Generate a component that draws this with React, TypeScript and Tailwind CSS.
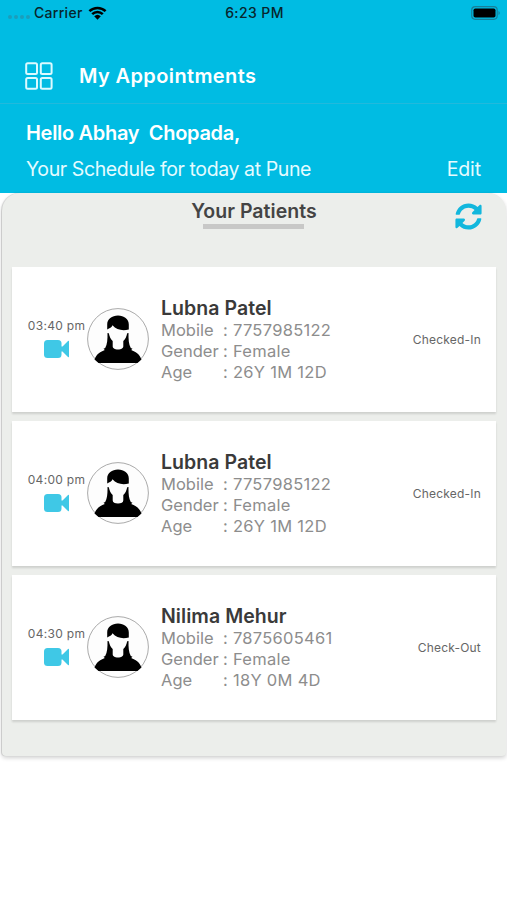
import React from 'react';
import { FaSyncAlt } from 'react-icons/fa';

type Appointment = {
  time: string;
  name: string;
  mobile: string;
  gender: string;
  age: string;
  status: string;
};

const appointments: Appointment[] = [
  { time: '03:40 pm', name: 'Lubna Patel', mobile: '7757985122', gender: 'Female', age: '26Y 1M 12D', status: 'Checked-In' },
  { time: '04:00 pm', name: 'Lubna Patel', mobile: '7757985122', gender: 'Female', age: '26Y 1M 12D', status: 'Checked-In' },
  { time: '04:30 pm', name: 'Nilima Mehur', mobile: '7875605461', gender: 'Female', age: '18Y 0M 4D', status: 'Check-Out' },
];

export default function App() {
  return (
    <div className="h-[900px] w-[507px] overflow-hidden bg-white font-['Inter',sans-serif]">
      <header className="h-[193px] bg-[#00bce3] text-white">
        <StatusBar />
        <div className="flex h-[78px] items-center border-b border-[#22b9dc] pt-[23px] pl-[25px]">
          <GridIcon />
          <h1 className="ml-[26px] text-[20px] leading-[26px] font-semibold tracking-[0.38px] whitespace-nowrap">My Appointments</h1>
        </div>
        <div className="pt-[16px] pr-[26px] pl-[26px]">
          <p className="text-[20px] leading-[26px] font-semibold tracking-[-0.3px] whitespace-pre">Hello Abhay  Chopada,</p>
          <div className="mt-[10px] flex justify-between text-[19.5px] leading-[26px] whitespace-nowrap text-[#e4fbff]">
            <span className="tracking-[-0.39px]">Your Schedule for today at Pune</span>
            <span className="tracking-[-0.1px]">Edit</span>
          </div>
        </div>
      </header>

      <main className="mr-px ml-[2px] h-[563px] rounded-t-[18px] rounded-b-[4px] bg-[#eceeeb] px-[10px] shadow-[0_2px_4px_rgba(0,0,0,0.18),-1px_0_1px_rgba(0,0,0,0.15)]">
        <div className="grid h-[74px] grid-cols-3 items-start">
          <div className="col-start-2 flex flex-col items-center pt-[5px]">
            <h2 className="text-[19.5px] leading-[26px] font-semibold tracking-[0.05px] whitespace-nowrap text-[#444]">Your Patients</h2>
            <div className="h-[5px] w-[101px] bg-[#c8c8c7]" />
          </div>
          <FaSyncAlt className="mt-[10px] mr-[14px] size-[27px] justify-self-end text-[#12b7dd]" />
        </div>
        <div className="flex flex-col gap-[9px]">
          {appointments.map((a) => (
            <PatientCard key={a.time} {...a} />
          ))}
        </div>
      </main>
    </div>
  );
}

const PatientCard: React.FC<Appointment> = ({ time, name, mobile, gender, age, status }) => (
  <section className="flex h-[145px] items-center bg-white pr-[15px] pl-[16px] shadow-[0_2px_2px_rgba(0,0,0,0.13)]">
    <div className="flex w-[57px] flex-col items-center pb-[3px]">
      <span className="text-[12px] leading-[16px] tracking-[0.3px] whitespace-nowrap text-[#666]">{time}</span>
      <VideoIcon />
    </div>
    <Avatar />
    <div className="ml-[12px] text-[16.5px] leading-[20.7px] text-[#8d8d8d]">
      <h3 className="mt-[1px] text-[19.5px] leading-[23px] font-semibold tracking-[0.05px] text-[#3a3a3a]">{name}</h3>
      <Detail label="Mobile" value={mobile} />
      <Detail label="Gender" value={gender} />
      <Detail label="Age" value={age} />
    </div>
    <span className="ml-auto pt-[1px] text-[12px] leading-[16px] tracking-[0.2px] whitespace-nowrap text-[#666]">{status}</span>
  </section>
);

const Detail: React.FC<{ label: string; value: string }> = ({ label, value }) => (
  <div className="flex whitespace-pre">
    <span className="w-[62px]">{label}</span>
    <span className="tracking-[0.28px]">: {value}</span>
  </div>
);

const StatusBar = () => (
  <div className="flex h-[26px] items-center text-[14px] font-medium text-[#08252c]">
    <div className="flex flex-1 items-center pl-[8px]">
      <div className="mt-[8px] flex gap-[2px]">
        {[0, 1, 2, 3].map((i) => (
          <i key={i} className="size-[4px] rounded-full bg-[#1b9dbb]" />
        ))}
      </div>
      <span className="-mt-px ml-[4px] tracking-[0.3px]">Carrier</span>
      <svg width="19" height="14" viewBox="0 0 19 14" className="ml-[5px]">
        <path d="M1.4 5.2a11.6 11.6 0 0 1 16.2 0M4.2 8.2a7.6 7.6 0 0 1 10.6 0" fill="none" stroke="#000" strokeWidth="2.5" />
        <path d="M6.2 10.3a4.8 4.8 0 0 1 6.6 0L9.5 13.7z" fill="#000" />
      </svg>
    </div>
    <span className="-mt-px tracking-[0.4px]">6:23 PM</span>
    <div className="flex flex-1 justify-end pr-[6px]">
      <svg width="30" height="14" viewBox="0 0 30 14">
        <rect x="0.7" y="0.7" width="25.5" height="12.6" rx="3.5" fill="none" stroke="#17809a" strokeWidth="1.2" />
        <rect x="2.5" y="2.5" width="22" height="9" rx="1.8" fill="#000" />
        <path d="M27.5 5v4a2.2 2.2 0 0 0 0-4z" fill="#17809a" />
      </svg>
    </div>
  </div>
);

const GridIcon = () => (
  <svg width="28" height="28" viewBox="0 0 28 28" fill="none" stroke="#dcfaff" strokeWidth="2">
    <rect x="1.2" y="1.2" width="10.8" height="10.8" rx="1.5" />
    <rect x="15.8" y="1.2" width="10.8" height="10.8" rx="1.5" />
    <rect x="1.2" y="16" width="10.8" height="10.8" rx="1.5" />
    <rect x="15.8" y="16" width="10.8" height="10.8" rx="1.5" />
  </svg>
);

const VideoIcon = () => (
  <svg width="25" height="18" viewBox="0 0 25 18" fill="#3fc8e6" className="mt-[6px]">
    <rect width="17.5" height="18" rx="3.5" />
    <path d="M17 6.5h1.5L24 1q1-.8 1 .4v15.2q0 1.200-1 .4l-5.500-5.500H17z" />
  </svg>
);

const Avatar = () => (
  <svg width="62" height="62" viewBox="0 0 62 62" className="mb-[1px] ml-[2px] shrink-0">
    <circle cx="31" cy="31" r="30.4" fill="#fdfdfd" stroke="#aaa" strokeWidth="1" />
    {/* hair cap and fringe */}
    <path d="M20.200 21.500V16.500C20.200 11 25 7.500 31 7.500S41.800 11 41.800 16.500V21.500c-6.300 1.500-12.300.5-16.300-4.200-.8 2.200-2.800 3-5.300 4.200z" />
    {/* long hair and shoulders */}
    <path d="M20.5 25l1.3.3c.7 3.2 1.8 5.900 3.900 7.700v5c-.2 2.200 2 3.600 5.300 3.600s5.500-1.400 5.300-3.600v-5c2.100-1.800 3.200-4.500 3.900-7.700l1.300-.3c-.1 6.500.2 11 2.300 15l1.700.8-1.300 1.300c4.300 1.700 8 3.700 10.300 9.400L50.500 55h-39L7.500 51.500c2.300-5.700 6-7.700 10.300-9.400l-1.300-1.300 1.700-.8c2.100-4 2.400-8.500 2.300-15z" />
  </svg>
);
